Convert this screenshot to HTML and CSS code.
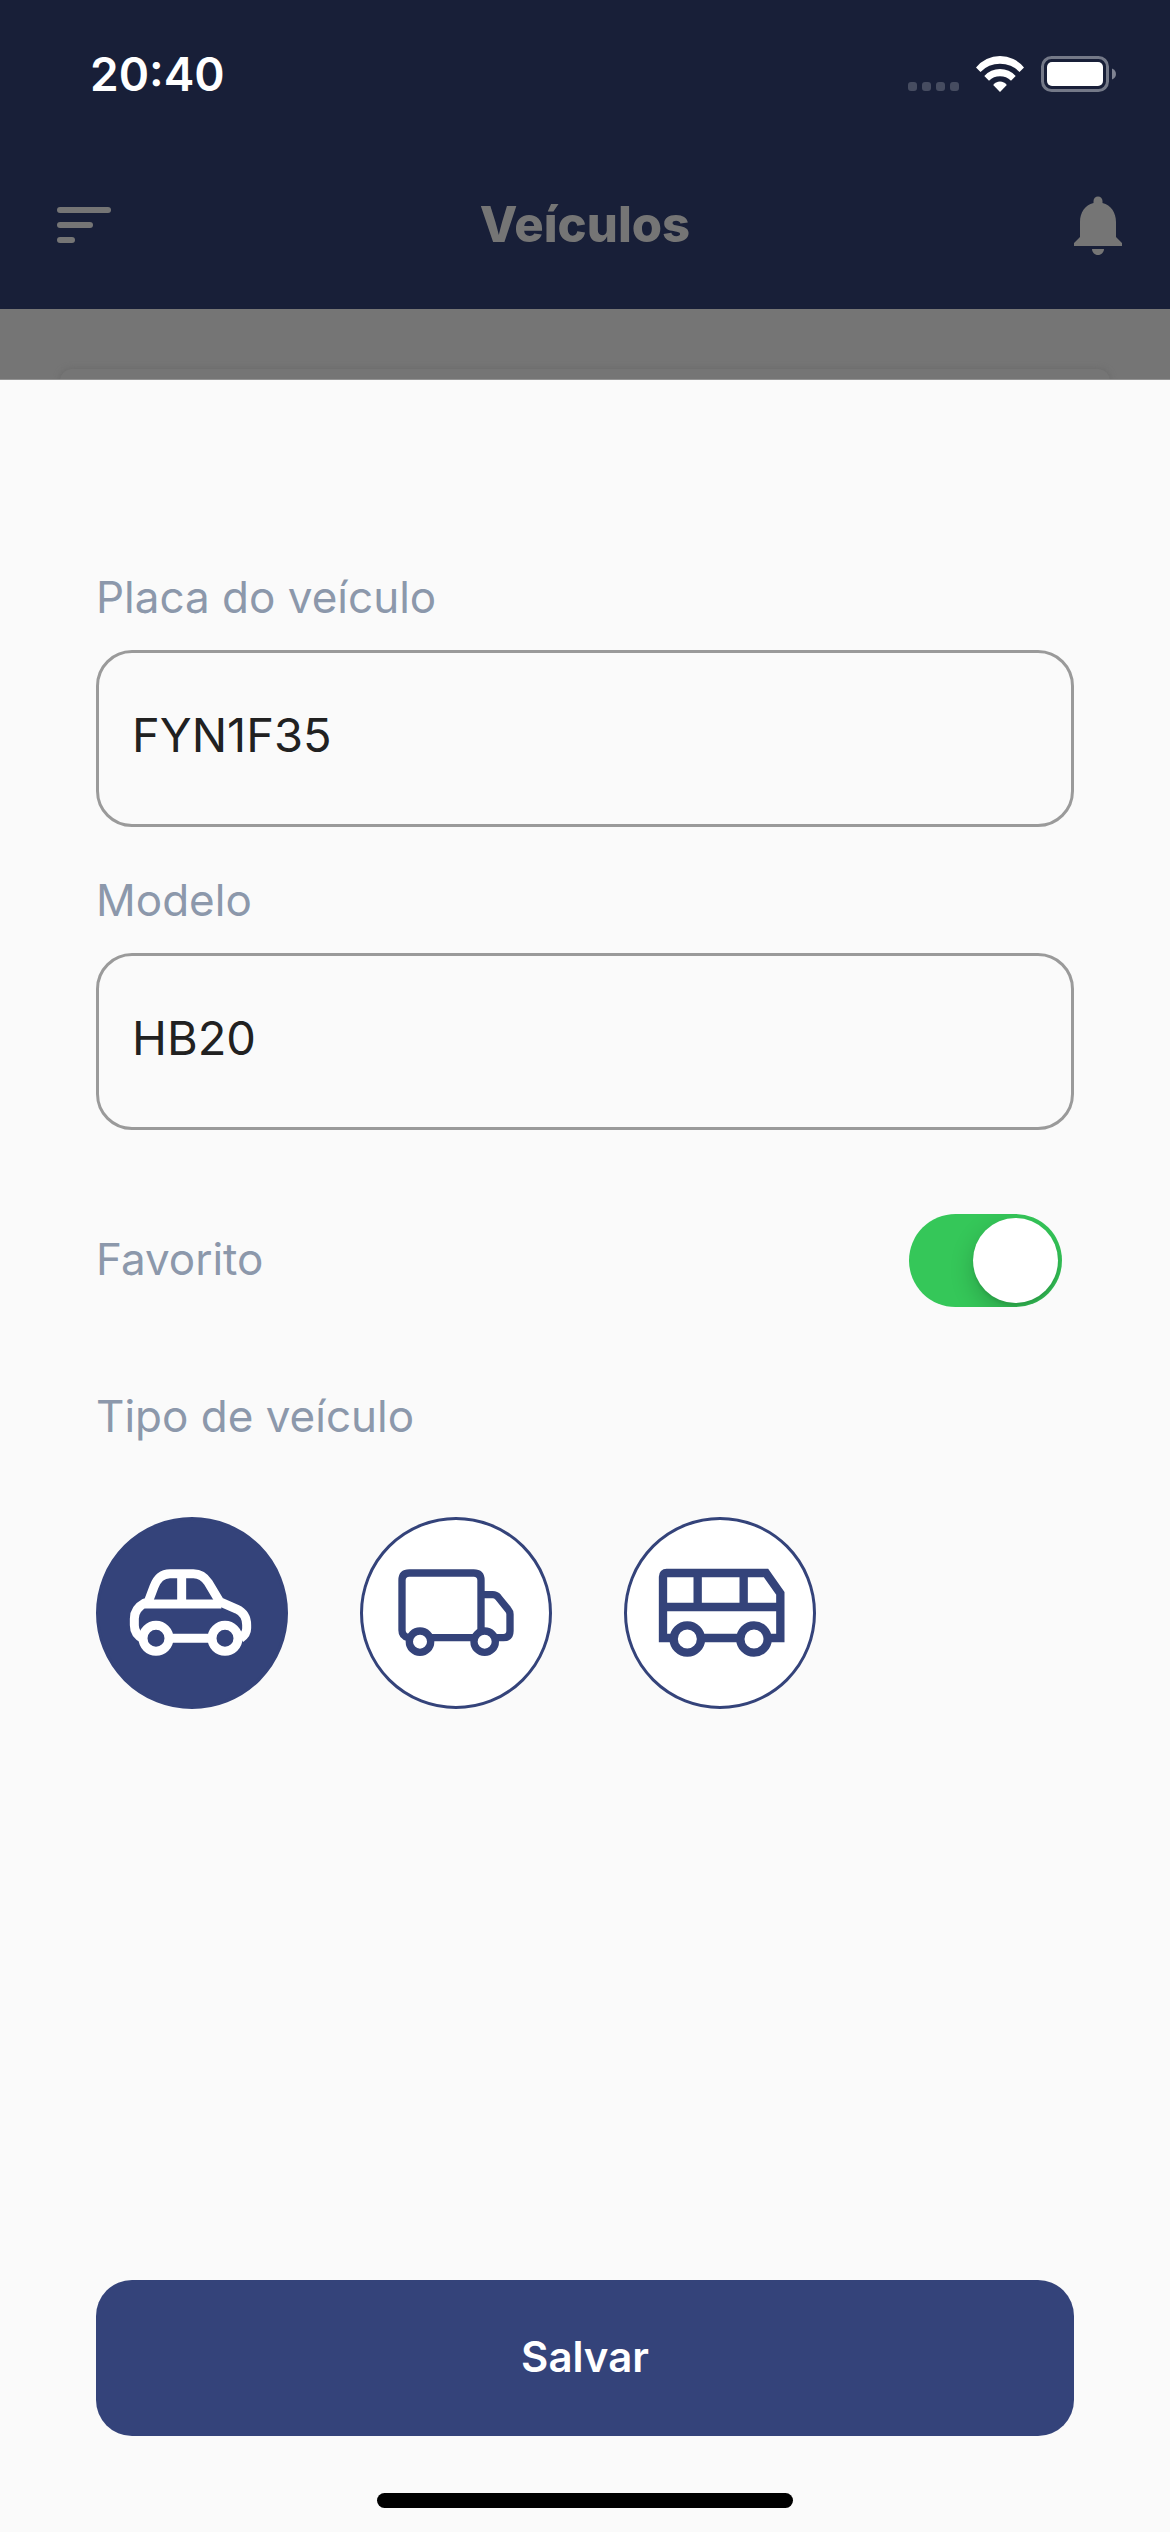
FILE: index.html
```html
<!DOCTYPE html>
<html lang="pt-BR">
<head>
  <meta charset="utf-8">
  <meta name="viewport" content="width=device-width, initial-scale=1">
  <title>Veículos</title>
  <link rel="stylesheet" href="styles.css">
</head>
<body>
  <header class="top">
    <div class="status">
      <time class="clock">20:40</time>
      <div class="indicators">
        <div class="signal"><i></i><i></i><i></i><i></i></div>
        <svg class="wifi" viewBox="0 0 48 36" aria-hidden="true">
          <path d="M0 11.500A30.800 30.800 0 0 1 48 11.500L43.500 16A27 27 0 0 0 4.500 16Z"/>
          <path d="M8.300 20A21.100 21.100 0 0 1 39.700 20L35 24.700A16 16 0 0 0 13 24.700Z"/>
          <path d="M17.200 29A8.500 8.500 0 0 1 30.800 29L24 36Z"/>
        </svg>
        <svg class="battery" viewBox="0 0 75 36" aria-hidden="true">
          <rect class="battery-case" x="1.500" y="1.500" width="65" height="33" rx="9"/>
          <rect class="battery-level" x="6" y="6" width="56" height="24" rx="5"/>
          <path class="battery-tip" d="M71 12.500C76.300 14.500 76.300 21.500 71 23.500Z"/>
        </svg>
      </div>
    </div>
    <nav class="bar">
      <button class="icon-button menu" type="button" aria-label="Menu">
        <svg viewBox="0 0 24 24"><rect x="3" y="6" width="18" height="2" rx="1"/><rect x="3" y="11" width="12" height="2" rx="1"/><rect x="3" y="16" width="6" height="2" rx="1"/></svg>
      </button>
      <h1 class="title">Veículos</h1>
      <button class="icon-button bell" type="button" aria-label="Notificações">
        <svg viewBox="0 0 24 24"><path d="M12 22c1.100 0 2-.9 2-2h-4c0 1.100.89 2 2 2zm6-6v-5c0-3.070-1.640-5.640-4.500-6.320V4c0-.83-.67-1.500-1.500-1.500s-1.500.67-1.500 1.500v.68C7.630 5.360 6 7.920 6 11v5l-2 2v1h16v-1l-2-2z"/></svg>
      </button>
    </nav>
  </header>

  <div class="backdrop"><div class="backdrop-card"></div></div>

  <main class="sheet">
    <form class="form">
      <div class="field">
        <label class="label" for="plate">Placa do veículo</label>
        <input class="input" id="plate" type="text" value="FYN1F35">
      </div>
      <div class="field">
        <label class="label" for="model">Modelo</label>
        <input class="input" id="model" type="text" value="HB20">
      </div>
      <div class="favorite">
        <label class="label" for="favorite">Favorito</label>
        <input class="switch" id="favorite" type="checkbox" role="switch" checked>
      </div>
      <fieldset class="types">
        <legend class="label">Tipo de veículo</legend>
        <div class="type-list">
          <label class="type">
            <input type="radio" name="type" value="car" aria-label="Carro" checked>
            <svg class="car" viewBox="0 0 576 576">
              <path d="M142 366Q115 352 115 325V305Q115 275 146 258L157 254L174 209Q188 170 222 170H292Q320 170 337 197L371 254L422 276Q452 290 452 324V334Q452 352 434 364"/>
              <path d="M146 261H376M257 170V261M225 364H342"/>
              <circle cx="180" cy="364" r="39"/><circle cx="387" cy="364" r="39"/>
            </svg>
          </label>
          <label class="type">
            <input type="radio" name="type" value="truck" aria-label="Caminhão">
            <svg class="truck" viewBox="0 0 576 576">
              <path d="M145 362Q126 358 126 340V190Q126 168 148 168H341Q363 168 363 190V362H148"/>
              <path d="M363 233H398Q408 233 414 240L444 277Q450 284 450 292V342Q450 362 430 362H374"/>
              <circle cx="180" cy="374" r="32"/><circle cx="374" cy="374" r="32"/>
            </svg>
          </label>
          <label class="type">
            <input type="radio" name="type" value="bus" aria-label="Ônibus">
            <svg class="bus" viewBox="0 0 576 576">
              <path d="M117 363V179Q117 168 128 168H426L469 229V363Z"/>
              <path d="M117 270H469M221 168V270M359 168V270"/>
              <circle cx="190" cy="366" r="41"/><circle cx="390" cy="366" r="41"/>
            </svg>
          </label>
        </div>
      </fieldset>
      <button class="save" type="submit">Salvar</button>
    </form>
    <div class="home-indicator"></div>
  </main>
</body>
</html>
```
FILE: styles.css
```css
* {
  box-sizing: border-box;
}

body {
  display: flex;
  flex-direction: column;
  min-height: 100vh;
  margin: 0;
  background: #fafafa;
  font-family: Inter, "Liberation Sans", sans-serif;
}

/* Header */
.top {
  background: #181f38;
}

.status {
  display: flex;
  align-items: center;
  justify-content: space-between;
  height: 148px;
  padding: 0 54px 0 90px;
  color: #fff;
}

.clock {
  font-size: 46px;
  font-weight: 600;
  line-height: 56px;
}

.indicators {
  display: flex;
  align-items: flex-end;
  gap: 17px;
}

.signal {
  display: flex;
  gap: 5px;
  padding-bottom: 1px;
}

.signal i {
  width: 9px;
  height: 9px;
  border-radius: 3px;
  background: #464c60;
}

.wifi {
  width: 48px;
  height: 36px;
  fill: #fff;
}

.battery {
  width: 75px;
  height: 36px;
}

.battery-case {
  fill: none;
  stroke: #747988;
  stroke-width: 3;
}

.battery-level {
  fill: #fff;
}

.battery-tip {
  fill: #7f8392;
}

.bar {
  display: grid;
  grid-template-columns: 1fr auto 1fr;
  align-items: center;
  height: 161px;
  padding: 0 36px 7px;
  color: #757575;
}

.icon-button {
  width: 72px;
  height: 72px;
  padding: 0;
  border: 0;
  background: none;
  color: inherit;
}

.menu {
  margin-left: 12px;
}

.bell {
  justify-self: end;
}

.icon-button svg {
  display: block;
  width: 100%;
  height: 100%;
  fill: currentColor;
}

.title {
  margin: 0;
  font-size: 49px;
  font-weight: 800;
  line-height: 60px;
}

/* Dimmed page behind the sheet */
.backdrop {
  height: 71px;
  padding: 60px 60px 0;
  overflow: hidden;
  border-bottom: 1px solid #939393;
  background: #757575;
}

.backdrop-card {
  height: 60px;
  border-radius: 12px;
  background: #757575;
  box-shadow: 0 0 6px #696969;
}

/* Sheet */
.sheet {
  display: flex;
  flex: 1;
  flex-direction: column;
  align-items: center;
  padding: 190px 96px 24px;
}

.form {
  display: flex;
  flex: 1;
  flex-direction: column;
  width: 100%;
}

.field {
  display: flex;
  flex-direction: column;
  gap: 26px;
  margin-bottom: 46px;
}

.label {
  padding: 0;
  color: #8c98ab;
  font-size: 44px;
  line-height: 54px;
}

.input {
  width: 100%;
  height: 177px;
  padding: 0 33px 8px;
  border: 3px solid #9a9a9a;
  border-radius: 36px;
  background: transparent;
  color: #212121;
  font: inherit;
  font-size: 47px;
}

.favorite {
  display: flex;
  align-items: center;
  justify-content: space-between;
  margin: 38px 12px 82px 0;
}

.favorite .label {
  padding-bottom: 3px;
}

.switch {
  display: flex;
  justify-content: flex-end;
  width: 153px;
  height: 93px;
  margin: 0;
  padding: 4px;
  overflow: hidden;
  appearance: none;
  border-radius: 47px;
  background: #d8d8dc;
}

.switch::before {
  width: 85px;
  height: 85px;
  border-radius: 50%;
  background: #fff;
  box-shadow: 0 9px 24px rgb(0 0 0 / 20%), 0 3px 3px rgb(0 0 0 / 8%);
  content: "";
}

.switch:not(:checked) {
  justify-content: flex-start;
}

.switch:checked {
  background: #35c759;
}

.types {
  min-width: 0;
  margin: 0;
  padding: 0;
  border: 0;
}

.type-list {
  display: flex;
  gap: 72px;
  padding-top: 74px;
}

.type {
  display: grid;
  width: 192px;
  height: 192px;
}

.type input,
.type svg {
  grid-area: 1 / 1;
  width: 100%;
  height: 100%;
  margin: 0;
}

.type input {
  appearance: none;
  border: 3px solid #34437a;
  border-radius: 50%;
  background: #fff;
}

.type input:checked {
  background: #34437a;
}

.type svg {
  z-index: 1;
  fill: none;
  stroke: #34437a;
  pointer-events: none;
}

.type circle {
  fill: #fff;
}

.type input:checked + svg {
  stroke: #fff;
}

.type input:checked + svg circle {
  fill: #34437a;
}

.car {
  stroke-width: 27;
}

.truck {
  stroke-width: 22;
}

.bus {
  stroke-width: 25;
}

.save {
  width: 100%;
  height: 156px;
  margin: auto 0 57px;
  padding: 0 0 3px;
  border: 0;
  border-radius: 36px;
  background: #34437a;
  color: #fff;
  font: inherit;
  font-size: 42px;
  font-weight: 600;
}

.home-indicator {
  width: 416px;
  height: 15px;
  border-radius: 8px;
  background: #000;
}
```
